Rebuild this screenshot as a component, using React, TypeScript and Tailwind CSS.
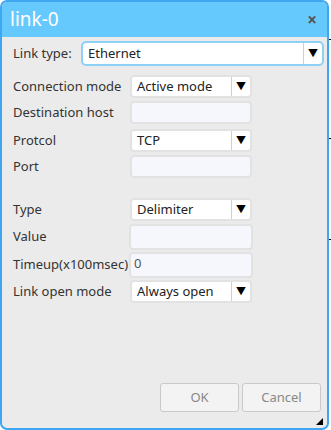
import React from "react"

const font = { fontFamily: '"Noto Sans", "Noto Sans CJK JP", sans-serif' }

const Select = ({ value, wide }: { value: string; wide?: boolean }) => (
  <div
    className={
      wide
        ? "flex h-[25px] flex-1 items-center rounded-[5px] border-2 border-[#8fd0f7] bg-white"
        : "flex h-[23px] w-[122px] items-center rounded-[4px] border-2 border-[#e2e2e2] bg-white"
    }
  >
    <div className="flex-1 pl-[5px] text-[13px] text-[#222] leading-none">{value}</div>
    <div className="flex h-full w-[19px] items-center justify-center border-l border-[#cfcfcf] text-[10px] text-black">
      ▼
    </div>
  </div>
)

const Input = ({ value, tall }: { value?: string; tall?: boolean }) => (
  <div
    className={
      "rounded-[4px] border-2 border-[#e2e2e2] bg-[#f5f7fd] pl-[3px] text-[13px] text-[#555] leading-none " +
      (tall ? "ml-[-1px] h-[26px] w-[124px] pt-[3px]" : "h-[23px] w-[122px]")
    }
  >
    {value}
  </div>
)

const Row = ({ label, children, className }: { label: string; children: React.ReactNode; className?: string }) => (
  <div className={"flex items-center " + (className ?? "")}>
    <div className="w-[117px] text-[13px] text-[#333]">{label}</div>
    {children}
  </div>
)

export default function App() {
  return (
    <div className="relative h-[430px] w-[331px] bg-white" style={font}>
      <div className="flex h-[430px] w-[329px] flex-col overflow-hidden rounded-[7px] border-2 border-[#3fa7f1] bg-[#ebebeb]">
        <div className="flex h-[35px] items-center justify-between bg-[#66c9fd] pl-[8px] pr-[10px]">
          <span className="text-[19px] text-white">link-0</span>
          <span className="text-[17px] font-bold text-[#555]">×</span>
        </div>
        <div className="flex flex-1 flex-col pl-[11px] pr-[3px]">
          <div className="mt-[4px] flex items-center">
            <div className="w-[68px] text-[13px] text-[#333]">Link type:</div>
            <Select value="Ethernet" wide />
          </div>
          <Row label="Connection mode" className="mt-[9px]">
            <Select value="Active mode" />
          </Row>
          <Row label="Destination host" className="mt-[3px]">
            <Input />
          </Row>
          <Row label="Protcol" className="mt-[5px]">
            <Select value="TCP" />
          </Row>
          <Row label="Port" className="mt-[3px]">
            <Input />
          </Row>
          <Row label="Type" className="mt-[20px]">
            <Select value="Delimiter" />
          </Row>
          <Row label="Value" className="mt-[3px]">
            <Input tall />
          </Row>
          <Row label="Timeup(x100msec)" className="mt-[2px]">
            <Input value="0" tall />
          </Row>
          <Row label="Link open mode" className="mt-[2px]">
            <Select value="Always open" />
          </Row>
          <div className="mt-auto mb-[16px] flex justify-end gap-[3px] pr-[3px]">
            <button className="h-[29px] w-[79px] rounded-[3px] border border-[#c9c9c9] bg-[#f3f3f3] text-[13px] text-[#888]">
              OK
            </button>
            <button className="h-[29px] w-[79px] rounded-[3px] border border-[#c9c9c9] bg-[#f3f3f3] text-[13px] text-[#888]">
              Cancel
            </button>
          </div>
        </div>
      </div>
      <div className="absolute bottom-[5px] right-[8px] h-0 w-0 border-b-[7px] border-l-[7px] border-b-black border-l-transparent" />
      <div className="absolute right-0 top-[39px] h-px w-[2px] bg-black" />
      <div className="absolute right-0 top-[138px] h-px w-[2px] bg-black" />
      <div className="absolute right-0 top-[239px] h-px w-[2px] bg-black" />
    </div>
  )
}
